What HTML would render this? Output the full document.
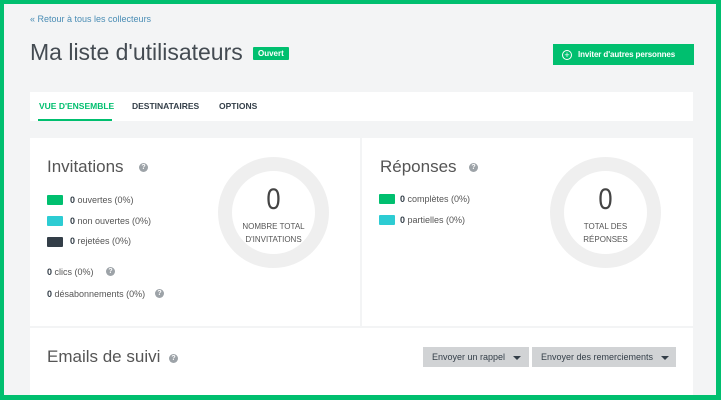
<!DOCTYPE html>
<html><head><meta charset="utf-8"><style>
*{margin:0;padding:0;box-sizing:border-box}
body{width:721px;height:400px;overflow:hidden;background:#f3f4f5;font-family:"Liberation Sans",sans-serif;position:relative;color:#333e48}
.b{position:absolute;background:#00bf6f}
.a{position:absolute;white-space:nowrap}
.card{position:absolute;background:#fff}
.sq{position:absolute;width:16px;height:10px;border-radius:1px}
.t{font-size:9px;color:#555}
.t b{color:#333e48}
.q{position:absolute;width:9px;height:9px;border-radius:50%;background:#9da3a8;color:#fff;font-size:7px;line-height:9px;text-align:center;font-weight:bold}
.donut{position:absolute;width:111px;height:111px;border-radius:50%;border:14px solid #efefef;text-align:center}
.btn{position:absolute;background:#d1d3d5;font-size:9px;color:#333e48;height:20px;line-height:20px;padding-left:9px}
.tri{display:inline-block;border-left:4px solid transparent;border-right:4px solid transparent;border-top:4px solid #333e48;vertical-align:middle;margin-left:8px}
.zero{font-size:30px;color:#444;margin-top:14px;line-height:30px;transform:scaleX(0.85)}
</style></head><body>
<div class="b" style="left:0;top:0;width:721px;height:4px"></div>
<div class="b" style="left:0;top:0;width:4px;height:400px"></div>
<div class="b" style="right:0;top:0;width:5px;height:400px"></div>
<div class="b" style="left:0;bottom:0;width:721px;height:5px"></div>

<div class="a" style="left:30px;top:14px;font-size:9px;color:#4a8db5">« Retour à tous les collecteurs</div>
<div class="a" style="left:30px;top:39px;font-size:23px;color:#444b52">Ma liste d'utilisateurs</div>
<div class="a" style="left:253px;top:47px;background:#00bf6f;color:#fff;font-size:8px;font-weight:bold;padding:0 5px;height:13px;line-height:13px;border-radius:1px">Ouvert</div>
<div class="a" style="left:553px;top:44px;width:141px;height:21px;background:#00bf6f;color:#fff;font-size:8px;font-weight:bold;line-height:21px;padding-left:25px;letter-spacing:-0.1px">Inviter d'autres personnes</div>
<div class="a" style="left:562px;top:50px;width:10px;height:10px;border:1px solid #fff;border-radius:50%;color:#fff;font-size:9px;line-height:8px;text-align:center">+</div>

<div class="card" style="left:30px;top:92px;width:663px;height:29px"></div>
<div class="a" style="left:39px;top:101px;font-size:8.5px;font-weight:bold;color:#00bf6f">VUE D'ENSEMBLE</div>
<div class="a" style="left:38px;top:119px;width:74px;height:2px;background:#00bf6f"></div>
<div class="a" style="left:132px;top:101px;font-size:8.5px;font-weight:bold;color:#333e48">DESTINATAIRES</div>
<div class="a" style="left:219px;top:101px;font-size:8.5px;font-weight:bold;color:#333e48">OPTIONS</div>

<div class="card" style="left:30px;top:138px;width:330px;height:188px"></div>
<div class="card" style="left:362px;top:138px;width:331px;height:188px"></div>
<div class="card" style="left:30px;top:328px;width:663px;height:67px"></div>

<div class="a" style="left:47px;top:157px;font-size:17px;color:#555">Invitations</div>
<div class="q" style="left:139px;top:163px">?</div>
<div class="sq" style="left:47px;top:195px;background:#00bf6f"></div><div class="a t" style="left:70px;top:195px"><b>0</b> ouvertes (0%)</div>
<div class="sq" style="left:47px;top:216px;background:#2dccd3"></div><div class="a t" style="left:70px;top:216px"><b>0</b> non ouvertes (0%)</div>
<div class="sq" style="left:47px;top:237px;background:#333e48"></div><div class="a t" style="left:70px;top:236px"><b>0</b> rejetées (0%)</div>
<div class="a t" style="left:47px;top:267px"><b>0</b> clics (0%)</div><div class="q" style="left:106px;top:267px">?</div>
<div class="a t" style="left:47px;top:289px"><b>0</b> désabonnements (0%)</div><div class="q" style="left:155px;top:289px">?</div>
<div class="donut" style="left:218px;top:157px"><div class="zero">0</div><div style="font-size:8px;color:#555;line-height:13px;margin-top:5px">NOMBRE TOTAL<br>D'INVITATIONS</div></div>

<div class="a" style="left:380px;top:157px;font-size:17px;color:#555">Réponses</div>
<div class="q" style="left:469px;top:163px">?</div>
<div class="sq" style="left:379px;top:194px;background:#00bf6f"></div><div class="a t" style="left:400px;top:194px"><b>0</b> complètes (0%)</div>
<div class="sq" style="left:379px;top:215px;background:#2dccd3"></div><div class="a t" style="left:400px;top:215px"><b>0</b> partielles (0%)</div>
<div class="donut" style="left:550px;top:157px"><div class="zero">0</div><div style="font-size:8px;color:#555;line-height:13px;margin-top:5px">TOTAL DES<br>RÉPONSES</div></div>

<div class="a" style="left:47px;top:347px;font-size:17px;color:#555">Emails de suivi</div>
<div class="q" style="left:169px;top:354px">?</div>
<div class="btn" style="left:423px;top:347px;width:106px">Envoyer un rappel<span class="tri"></span></div>
<div class="btn" style="left:532px;top:347px;width:144px">Envoyer des remerciements<span class="tri"></span></div>
</body></html>
